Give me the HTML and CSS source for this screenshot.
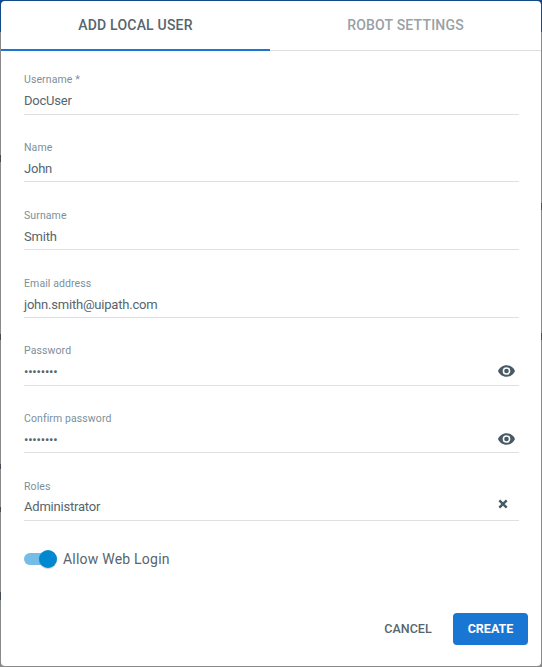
FILE: index.html
```html
<!DOCTYPE html>
<html lang="en">
<head>
<meta charset="utf-8">
<title>Add Local User</title>
<link rel="stylesheet" href="styles.css">
</head>
<body>
<main class="dialog">
  <nav class="tabs">
    <div class="tab tab-active"><span class="tab-text">ADD LOCAL USER</span></div>
    <div class="tab"><span class="tab-text">ROBOT SETTINGS</span></div>
  </nav>
  <form class="form">
    <div class="field"><div class="label"><span>Username *</span></div><div class="value"><span class="entry">DocUser</span></div></div>
    <div class="field"><div class="label"><span>Name</span></div><div class="value"><span class="entry">John</span></div></div>
    <div class="field"><div class="label"><span>Surname</span></div><div class="value"><span class="entry">Smith</span></div></div>
    <div class="field"><div class="label"><span>Email address</span></div><div class="value"><span class="entry">john.smith@uipath.com</span></div></div>
    <div class="field"><div class="label"><span>Password</span></div><div class="value"><span class="entry">••••••••</span>
      <svg class="eye" viewBox="1 4.5 22 15"><path d="M12 4.5C7 4.500 2.730 7.610 1 12c1.730 4.390 6 7.500 11 7.500s9.270-3.110 11-7.500c-1.730-4.390-6-7.500-11-7.500zM12 17a5 5 0 1 1 0-10 5 5 0 0 1 0 10zm0-8a3 3 0 1 0 0 6 3 3 0 0 0 0-6z"/></svg></div></div>
    <div class="field"><div class="label"><span>Confirm password</span></div><div class="value"><span class="entry">••••••••</span>
      <svg class="eye" viewBox="1 4.5 22 15"><path d="M12 4.5C7 4.500 2.730 7.610 1 12c1.730 4.390 6 7.500 11 7.500s9.270-3.110 11-7.500c-1.730-4.390-6-7.500-11-7.500zM12 17a5 5 0 1 1 0-10 5 5 0 0 1 0 10zm0-8a3 3 0 1 0 0 6 3 3 0 0 0 0-6z"/></svg></div></div>
    <div class="field"><div class="label"><span>Roles</span></div><div class="value value-roles"><span>Administrator</span>
      <svg class="clear" viewBox="0 0 10 10"><path d="M1.300 1.300l7.400 7.400M8.700 1.300l-7.400 7.400"/></svg></div></div>
  </form>
  <div class="toggle-row">
    <div class="track"><div class="thumb"></div></div>
    <span class="toggle-text">Allow Web Login</span>
  </div>
  <footer class="actions">
    <button class="btn" type="button">CANCEL</button>
    <button class="btn btn-primary" type="button">CREATE</button>
  </footer>
</main>
</body>
</html>
```

FILE: styles.css
```css
* { box-sizing: border-box; }
body {
  margin: 0;
  padding: 1px;
  height: 667px;
  overflow: hidden;
  font-family: Roboto, "Liberation Sans", sans-serif;
  color: #56656e;
  background:
    linear-gradient(#444c55, #444c55) 0 155px / 1px 7px no-repeat,
    linear-gradient(#444c55, #444c55) 0 334px / 1px 6px no-repeat,
    linear-gradient(#444c55, #444c55) 0 464px / 1px 5px no-repeat,
    linear-gradient(#444c55, #444c55) 0 507px / 1px 5px no-repeat,
    linear-gradient(#444c55, #444c55) 0 592px / 1px 8px no-repeat,
    linear-gradient(#555, #555) 541px 203px / 1px 7px no-repeat,
    linear-gradient(#555, #555) 541px 333px / 1px 7px no-repeat,
    linear-gradient(#134a8a 32px, #8a8a8a 32px);
}
.dialog {
  display: flex;
  flex-direction: column;
  width: 540px;
  height: 665px;
  border-radius: 4px;
  overflow: hidden;
  background: #fff;
}
.tabs { display: flex; height: 50px; }
.tab {
  width: 271px;
  display: flex;
  justify-content: center;
  padding-top: 16px;
  border-bottom: 1px solid #e0e0e0;
  font-size: 14px;
  line-height: 16px;
  font-weight: 500;
  letter-spacing: 0.2px;
  color: #98a1a5;
}
.tab-active {
  width: 269px;
  border-bottom: 2px solid #1976d2;
  color: #56656e;
}
.form { padding: 21.750px 22px 0 23px; }
.field { height: 42px; margin-bottom: 25.700px; border-bottom: 1px solid #e0e0e0; }
.label { height: 14px; padding-top: 0.700px; font-size: 10.500px; line-height: 13px; color: #7d8f9a; letter-spacing: 0.1px; }
.value { display: flex; align-items: center; height: 28px; font-size: 13px; line-height: 28px; letter-spacing: -0.21px; }
.value-roles { height: 27.500px; }
.entry { padding-top: 1.400px; }
.eye { width: 17px; height: 12px; margin: -1px 4.500px 0 auto; fill: #485a64; }
.clear { width: 10px; height: 10px; margin: -5px 11px 0 auto; fill: none; stroke: #485a64; stroke-width: 2.400; }
.toggle-row { display: flex; align-items: center; height: 20px; margin: 2.350px 0 0 23px; }
.track { display: flex; align-items: center; justify-content: flex-end; width: 32px; height: 12px; border-radius: 6px; background: #74bde6; }
.thumb { flex: none; width: 18px; height: 18px; margin-right: -0.500px; border-radius: 50%; background: #0288d1; box-shadow: 0 1px 1px rgba(0, 0, 0, 0.2); }
.toggle-text { margin-left: 7px; font-size: 14px; letter-spacing: 0.22px; }
.actions { display: flex; justify-content: flex-end; margin: auto 13px 21px 0; gap: 6px; }
.btn { width: 78px; height: 32px; padding: 0 0 1px; border: 0; border-radius: 4px; background: none; font: 500 12.500px Roboto, sans-serif; color: #56656e; }
.btn-primary { width: 75px; background: #1976d2; color: #fff; font-weight: 700; }
```
